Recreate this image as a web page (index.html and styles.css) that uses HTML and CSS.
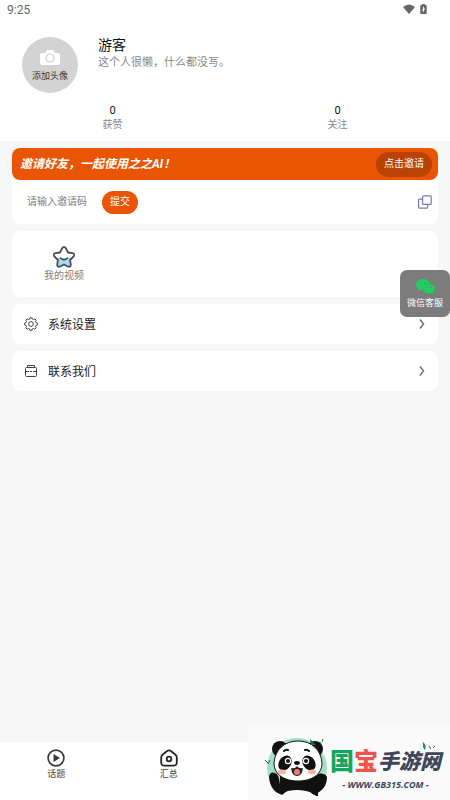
FILE: index.html
```html
<!DOCTYPE html>
<html lang="zh-CN">
<head>
    <meta charset="UTF-8">
    <meta name="viewport" content="width=device-width, initial-scale=1.0">
    <title>我的</title>
    <link rel="stylesheet" href="styles.css">
</head>
<body>
    <header class="profile">
        <div class="status-bar">
            <span>9:25</span>
            <div class="status-icons">
                <svg width="12" height="10" viewBox="0 0 12 10"><path d="M0 3Q6-2 12 3L6 10Z" fill="#666"/></svg>
                <svg width="7" height="11" viewBox="0 0 7 12"><path d="M2 1V0h3v1h1q1 0 1 1v8q0 1-1 1H1q-1 0-1-1V2q0-1 1-1Z" fill="#666"/><path d="M3 3h1v2h1L3.500 9 2 6h1Z" fill="#fff"/></svg>
            </div>
        </div>

        <div class="user">
            <button class="avatar">
                <svg width="20" height="16" viewBox="0 0 20 16"><path d="M2 3h3l2-3h6l2 3h3q2 0 2 2v8q0 2-2 2H2q-2 0-2-2V5q0-2 2-2Z" fill="#fff"/><circle cx="10" cy="8" r="4" fill="#fff" stroke="#ccc" stroke-width="1.200"/></svg>
                <span>添加头像</span>
            </button>
            <div class="user-info">
                <h1>游客</h1>
                <p>这个人很懒，什么都没写。</p>
            </div>
        </div>

        <div class="stats">
            <div class="stat"><b>0</b><span>获赞</span></div>
            <div class="stat"><b>0</b><span>关注</span></div>
        </div>
    </header>

    <main class="content">
        <section class="card">
            <div class="invite-banner">
                <strong>邀请好友，一起使用之之AI！</strong>
                <button class="invite-btn">点击邀请</button>
            </div>
            <form class="invite-form">
                <input type="text" class="code-input" placeholder="请输入邀请码" aria-label="请输入邀请码">
                <button type="button" class="submit-btn">提交</button>
                <button type="button" class="copy-btn" aria-label="复制">
                    <svg width="14" height="14" viewBox="0 0 14 14" fill="none" stroke="#777aa8" stroke-width="1.200"><rect x="4.600" y="0.800" width="8.600" height="8.600" rx="1"/><path d="M4.500 4.200H1.600q-1 0-1 1v7q0 1 1 1h7q1 0 1-1V9.500"/></svg>
                </button>
            </form>
        </section>

        <section class="card videos">
            <a href="#" class="video-link">
                <svg width="22" height="22" viewBox="0 0 22 22">
                    <path d="M5 12h12l1 7-2 2-5-2-5 2-2-2Z" fill="#a9d8f7"/>
                    <path d="M9 2.500q2-3 4 0l2 4 4.500.700q3 .800 1 3.300L17 14l.800 4.500q0 3-3 2L11 18.500l-3.800 2q-3 1-3-2L5 14 1.500 10.500q-2-2.500 1-3.300L7 6.500Z" fill="none" stroke="#4a4f57" stroke-width="1.800" stroke-linejoin="round"/>
                    <path d="M7.500 12q3.500 3.500 7 0" fill="none" stroke="#3d4650" stroke-width="1.600" stroke-linecap="round"/>
                </svg>
                <span>我的视频</span>
            </a>
        </section>

        <a href="#" class="card row">
            <svg width="14" height="14" viewBox="0 0 14 14" fill="none" stroke="#444"><path d="M5.500 2.200 6 .800h2l.500 1.400 1 .400 1.400-.700 1.300 1.300-.700 1.400.400 1 1.400.500v2l-1.400.400-.400 1 .700 1.400-1.400 1.300-1.400-.700-1 .400L8 13.300H6l-.500-1.400-1-.400-1.400.700-1.300-1.300.700-1.400-.400-1L.700 8V6l1.400-.500.400-1-.700-1.400 1.300-1.300 1.400.700Z" stroke-linejoin="round"/><circle cx="7" cy="7" r="2.400"/></svg>
            <span>系统设置</span>
            <svg class="arrow" width="6" height="10" viewBox="0 0 6 10"><path d="m1 .500 3.500 4.500L1 9.500" fill="none" stroke="#777" stroke-width="1.600"/></svg>
        </a>

        <a href="#" class="card row">
            <svg width="14" height="14" viewBox="0 0 14 14" fill="none" stroke="#444"><rect x="1.500" y="3.500" width="11" height="9" rx="1"/><path d="M3.500 3.500v-2h7v2M1.500 7.500h3.500M9 7.500h3.500M6 7.500h2"/></svg>
            <span>联系我们</span>
            <svg class="arrow" width="6" height="10" viewBox="0 0 6 10"><path d="m1 .500 3.500 4.500L1 9.500" fill="none" stroke="#777" stroke-width="1.600"/></svg>
        </a>
    </main>

    <nav class="tabbar">
        <a href="#" class="tab">
            <svg width="18" height="18" viewBox="0 0 18 18"><circle cx="9" cy="9" r="7.900" fill="none" stroke="#3b3b3b" stroke-width="1.700"/><path d="M6.500 5v8L13 9Z" fill="#3b3b3b"/></svg>
            <span>话题</span>
        </a>
        <a href="#" class="tab">
            <svg width="18" height="18" viewBox="0 0 18 18" fill="none" stroke="#252525" stroke-width="1.800"><path d="M7.500 1.800Q9 1 10.500 1.800L15 5.300q1.800 1.300 1.800 3.200v4.700q0 3.500-3.500 3.500H4.700q-3.500 0-3.500-3.500V8.500Q1.200 6.600 3 5.300Z"/><circle cx="9" cy="10" r="2.300"/></svg>
            <span>汇总</span>
        </a>
    </nav>

    <button class="service">
        <svg width="19" height="16" viewBox="0 0 19 16">
            <path d="M7 0c4 0 7 2.500 7 5.500S11 11 7 11l-2-.300L2 12l.500-2.500C1 8.500 0 7 0 5.500 0 2.500 3 0 7 0Z" fill="#1fcf63"/>
            <path d="M12.800 5c3.500 0 6.200 2 6.200 4.800 0 1.400-.800 2.600-2 3.400l.300 2.300-2.300-1.300-2.200.300c-3.500 0-6-2-6-4.700S9.300 5 12.800 5Z" fill="#1fcf63" stroke="#48a86c" stroke-width=".600"/>
            <circle cx="4.700" cy="4" r=".800" fill="#4a9a68"/><circle cx="9.300" cy="4" r=".800" fill="#4a9a68"/><circle cx="11" cy="8.500" r=".700" fill="#4a9a68"/><circle cx="15" cy="8.500" r=".700" fill="#4a9a68"/>
        </svg>
        <span>微信客服</span>
    </button>

    <aside class="site-badge">
        <svg class="panda" width="64" height="64" viewBox="0 0 64 64">
            <circle cx="33" cy="32" r="30" fill="#a7dfc4"/>
            <!-- body and paws -->
            <path d="M16 40h38v20H16Z" fill="#111"/>
            <path d="M5 41q1-6 6-4 3 1 4 6l3 16q-12-4-13-18ZM49 59l3-15q0-4 4-6 5-1 7 3 0 13-14 18Z" fill="#111"/>
            <path d="M12 64q4-10 21-10t22 10Z" fill="#fafafa"/>
            <path d="M14 52l9 3-5 4q-4-2-4-7ZM54 52l-9 3 5 4q4-2 4-7Z" fill="#111"/>
            <circle cx="16" cy="13" r="8" fill="#111"/>
            <circle cx="51" cy="13" r="8" fill="#111"/>
            <path d="M34 5c14 0 23 9 24 22 0 12-11 18-24 18S10 39 10 27C11 14 20 5 34 5Z" fill="#fff" stroke="#111"/>
            <path d="M52 41q2-5 7-3 3 2 3 6l-9 3Z" fill="#111"/>
            <ellipse cx="21" cy="27" rx="6" ry="8" transform="rotate(35 21 27)" fill="#111"/>
            <ellipse cx="45" cy="27" rx="6" ry="8" transform="rotate(-35 45 27)" fill="#111"/>
            <circle cx="24" cy="25" r="3.200" fill="#fff"/><circle cx="42" cy="25" r="3.200" fill="#fff"/>
            <circle cx="24" cy="25" r="2" fill="#111"/><circle cx="42" cy="25" r="2" fill="#111"/>
            <path d="M20 15q2-2 4-1M41 14q2-1 4 1" fill="none" stroke="#111" stroke-width="2" stroke-linecap="round"/>
            <path d="M30 26q3-2 6 0 0 3-3 3t-3-3Z" fill="#111"/>
            <path d="M27 32q4 1 6-2 2 3 6 2-1 8-6 8t-6-8Z" fill="#222"/><ellipse cx="33" cy="36" rx="3" ry="3" fill="#f27874"/>
            <ellipse cx="18" cy="36" rx="4" ry="2.500" fill="#ffb2a6"/><ellipse cx="48" cy="36" rx="4" ry="2.500" fill="#ffb2a6"/>
            <path d="M46 3l6 6-5 0Z" fill="#176e50"/><path d="m1 24 3 3M6 24l-2 4M54 6l3 1M59 3l-1 3" stroke="#176e50"/>
        </svg>
        <div class="badge-text">
            <div class="badge-name"><span class="green">国</span><span class="red">宝</span><span class="dark">手游网</span></div>
            <div class="badge-url">- WWW.GB315.COM -</div>
        </div>
        <svg class="leaf" width="14" height="10" viewBox="0 0 14 10"><path d="M1 1q4 3 2 8-3-3-2-8Z" fill="#17915e"/><path d="m7 5 2 3M13 5l-2 2" stroke="#176e50"/></svg>
    </aside>
</body>
</html>
```
FILE: styles.css
```css
* {
    box-sizing: border-box;
}
body {
    margin: 0;
    min-height: 100vh;
    display: flex;
    flex-direction: column;
    background-color: #f7f7f7;
    color: #222;
    font-family: Roboto, "Noto Sans CJK SC", sans-serif;
    font-size: 10px;
    line-height: 16px;
}
a {
    color: inherit;
    text-decoration: none;
}
button {
    border: none;
    padding: 0;
    font: inherit;
    cursor: pointer;
}
svg {
    display: block;
    flex-shrink: 0;
}
.profile {
    background-color: #fff;
    padding-bottom: 8px;
}
.status-bar {
    display: flex;
    align-items: center;
    justify-content: space-between;
    height: 20px;
    padding: 0 23px 0 7px;
    color: #666;
    font-size: 12px;
}
.status-icons {
    display: flex;
    align-items: center;
    gap: 5px;
    padding-bottom: 2px;
}
.user {
    display: flex;
    gap: 20px;
    padding: 17px 22px 0;
}
.avatar {
    display: flex;
    flex-direction: column;
    align-items: center;
    gap: 3px;
    width: 56px;
    height: 56px;
    padding-top: 13px;
    border-radius: 50%;
    background-color: #d3d3d3;
    color: #333;
    font-size: 9px;
    line-height: 14px;
}
.user-info h1 {
    margin: 0;
    color: #111;
    font-size: 14px;
    font-weight: 400;
    line-height: 16px;
}
.user-info p {
    margin: 0;
    color: #888;
    font-size: 11px;
    line-height: 20px;
}
.stats {
    display: flex;
    padding-top: 11px;
}
.stat {
    flex: 1;
    display: flex;
    flex-direction: column;
    align-items: center;
    color: #888;
}
.stat b {
    color: #111;
    font-size: 11px;
    font-weight: 400;
    line-height: 13px;
}
.content {
    flex: 1;
    display: flex;
    flex-direction: column;
    gap: 7px;
    padding: 7px 12px;
}
.card {
    border-radius: 8px;
    background-color: #fff;
}
.invite-banner {
    display: flex;
    align-items: center;
    justify-content: space-between;
    height: 32px;
    padding: 0 6px 0 8px;
    border-radius: 8px;
    background-color: #ea5504;
    color: #fff;
    font-size: 12px;
}
.invite-banner strong {
    font-style: italic;
}
.invite-btn {
    height: 25px;
    padding: 0 8px;
    border-radius: 13px;
    background-color: #b84303;
    color: #fff;
    font-size: 10px;
}
.invite-form {
    display: flex;
    align-items: center;
    height: 44px;
    padding: 0 6px 0 15px;
}
.code-input {
    width: 75px;
    padding: 0;
    border: none;
    outline: none;
    background: none;
    font: inherit;
}
.code-input::placeholder {
    color: #808080;
}
.submit-btn {
    height: 23px;
    padding: 0 8px;
    border-radius: 12px;
    background-color: #ea5504;
    color: #fff;
}
.copy-btn {
    margin-left: auto;
    background: none;
}
.videos {
    display: flex;
    padding: 15px 32px 13px;
}
.video-link {
    display: flex;
    flex-direction: column;
    align-items: center;
    color: #808080;
}
.row {
    display: flex;
    align-items: center;
    gap: 10px;
    height: 40px;
    padding: 0 13px 0 12px;
    font-size: 12px;
    line-height: 18px;
}
.row span {
    padding-top: 2px;
}
.arrow {
    margin-left: auto;
}
.tabbar {
    display: flex;
    height: 58px;
    padding-top: 7px;
    background-color: #fff;
}
.tab {
    width: 25%;
    display: flex;
    flex-direction: column;
    align-items: center;
    color: #444;
    font-size: 9px;
    line-height: 14px;
}
/* floating customer service button */
.service {
    position: fixed;
    top: 270px;
    right: 0;
    display: flex;
    flex-direction: column;
    align-items: center;
    width: 50px;
    height: 47px;
    padding-top: 9px;
    border-radius: 7px;
    background-color: #7c7c7c;
    color: #fff;
    font-size: 9px;
}
.site-badge {
    position: fixed;
    right: 0;
    bottom: 0;
    display: flex;
    align-items: flex-start;
    gap: 2px;
    width: 202px;
    height: 75px;
    padding: 11px 0 0 16px;
    background-color: #fafafa;
}
.badge-text {
    padding-top: 11px;
}
.badge-name {
    display: flex;
    align-items: center;
    height: 30px;
    font-size: 24px;
    font-weight: 900;
    line-height: 30px;
}
.badge-name .green {
    color: #12a660;
}
.badge-name .red {
    color: #f4534d;
}
.badge-name .dark {
    color: #3e4658;
    font-size: 21px;
    font-style: italic;
}
.badge-url {
    color: #3e4658;
    font-family: "Open Sans", sans-serif;
    font-size: 9px;
    font-style: italic;
    font-weight: 700;
    text-align: center;
}
.leaf {
    position: absolute;
    top: 16px;
    right: 14px;
}
```
